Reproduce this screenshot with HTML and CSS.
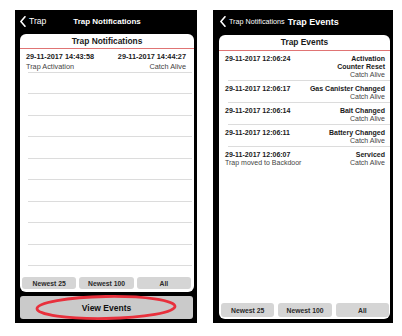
FILE: index.html
```html
<!DOCTYPE html>
<html><head><title>Trap Notifications</title><meta name="viewport" content="width=device-width, initial-scale=1">
<link rel="stylesheet" href="styles.css">
</head><body>
<div class="screens">
 <div class="phone p1">
  <div class="nav">
   <span class="back"><svg class="chev" width="6" height="11" viewBox="0 0 6 11"><polyline points="5,0.8 0.9,5.5 5,10.2"/></svg>Trap</span>
   <span class="title">Trap Notifications</span>
   <span></span>
  </div>
  <div class="card">
   <div class="card-h">Trap Notifications</div>
   <ul class="list">
    <li class="row"><div><b>29-11-2017 14:43:58</b><span>Trap Activation</span></div><div class="r"><b>29-11-2017 14:44:27</b><span>Catch Alive</span></div></li>
    <li class="empty"></li><li class="empty"></li><li class="empty"></li>
    <li class="empty"></li><li class="empty"></li><li class="empty"></li>
    <li class="empty"></li><li class="empty"></li><li class="empty"></li>
   </ul>
   <div class="btns"><button>Newest 25</button><button>Newest 100</button><button>All</button></div>
  </div>
  <div class="view">
   <button>View Events</button>
   <svg class="ring" width="146" height="27" viewBox="0 0 146 27"><ellipse cx="72" cy="13.5" rx="69" ry="11" transform="rotate(-1 72 13.5)"/></svg>
  </div>
 </div>

 <div class="phone p2">
  <div class="nav nav2">
   <span class="back"><svg class="chev" width="6" height="11" viewBox="0 0 6 11"><polyline points="5,0.8 0.9,5.5 5,10.2"/></svg><span class="blabel">Trap Notifications</span></span>
   <span class="title">Trap Events</span>
  </div>
  <div class="card">
   <div class="card-h">Trap Events</div>
   <ul class="list ev">
    <li class="row"><div><b>29-11-2017 12:06:24</b></div><div class="r"><b>Activation</b><b>Counter Reset</b><span>Catch Alive</span></div></li>
    <li class="row"><div><b>29-11-2017 12:06:17</b></div><div class="r"><b>Gas Canister Changed</b><span>Catch Alive</span></div></li>
    <li class="row"><div><b>29-11-2017 12:06:14</b></div><div class="r"><b>Bait Changed</b><span>Catch Alive</span></div></li>
    <li class="row"><div><b>29-11-2017 12:06:11</b></div><div class="r"><b>Battery Changed</b><span>Catch Alive</span></div></li>
    <li class="row"><div><b>29-11-2017 12:06:07</b><span>Trap moved to Backdoor</span></div><div class="r"><b>Serviced</b><span>Catch Alive</span></div></li>
   </ul>
   <div class="btns"><button>Newest 25</button><button>Newest 100</button><button>All</button></div>
  </div>
 </div>
</div>
</body></html>
```

FILE: styles.css
```css
html{font-family:"Liberation Sans",Arial,Helvetica,sans-serif}
body{margin:0;padding:0;background:#fff}
.screens{display:flex;gap:16px;padding:10px 0 0 15px}
.phone{background:#000;height:313px;box-sizing:border-box;display:flex;flex-direction:column}
.p1{width:182px;padding:0 3px 4px 5px}
.p2{width:180px;padding:0 3px 4px 6px}

.nav{height:24px;color:#fff;display:grid;grid-template-columns:1fr auto 1fr;align-items:center}
.nav .back{display:flex;align-items:center;font-size:8.6px;margin-top:-2px}
.chev{margin-right:3px}
.chev polyline{fill:none;stroke:#fff;stroke-width:1.6;stroke-linecap:round;stroke-linejoin:round}
.nav .title{font-weight:bold;font-size:8px;margin-top:-2px}
.nav2{height:25px;display:flex;justify-content:flex-start}
.nav2 .back{margin-left:1px}
.nav2 .blabel{font-size:7.2px;margin-right:3px}
.nav2 .title{font-size:9px}

.card{flex:1;background:#fff;border-radius:6px;display:flex;flex-direction:column;overflow:hidden}
.card-h{height:14px;line-height:14px;text-align:center;font-weight:bold;font-size:8.4px;color:#1a1a1a;border-bottom:1px solid #e07474}
.p2 .card-h{height:15px;line-height:15px}

ul.list{list-style-type:none;margin:0;padding:0;flex:1}
.list li{background:linear-gradient(#dcdcdc,#dcdcdc) 8px 100%/calc(100% - 10px) 1px no-repeat}
.row{display:flex;justify-content:space-between;padding:3px 8px 2px 6px;line-height:9.5px;font-size:7.3px;color:#444}
.row div{display:flex;flex-direction:column}
.row div.r{text-align:right}
.row b{color:#1a1a1a}
.empty{height:21.45px}
.ev .row{padding:4px 5px 2px 6px;line-height:8px;font-size:7px}
.ev li{background-position:9px 100%;background-size:calc(100% - 9px) 1px}
.ev li:last-child{background:none}

.btns{display:flex;gap:3px;padding:0 3px 3px 2px}
.btns button{flex:1;height:12px;padding:0;border:0;border-radius:3px;background:#d5d5d5;color:#2a2a2a;font:bold 6.8px "Liberation Sans",Arial,sans-serif}
.p2 .btns{gap:4px;padding:0 1px 2px 2px}
.p2 .btns button{height:14px}

.view{position:relative;margin-top:4px;height:23px;margin-right:1px}
.view button{width:100%;height:100%;border:0;border-radius:3px;background:#cacaca;color:#111;font:bold 8.5px "Liberation Sans",Arial,sans-serif;padding:0}
.ring{position:absolute;left:14px;top:-2px;pointer-events:none}
.ring ellipse{fill:none;stroke:#e8303c;stroke-width:2.8}
```
